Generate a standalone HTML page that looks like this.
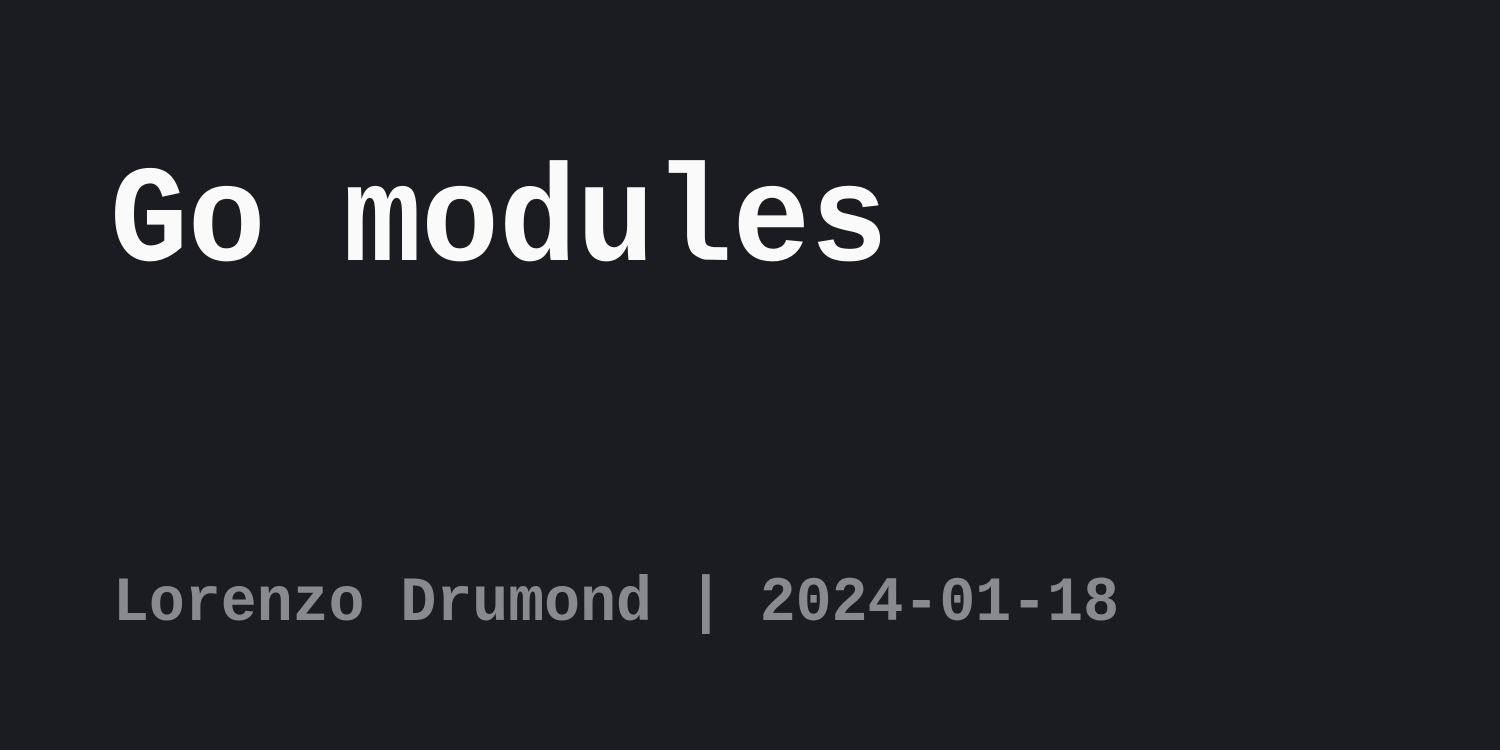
<!DOCTYPE html>
<html><head><meta charset="utf-8"><style>
html,body{margin:0;padding:0;width:1500px;height:750px;background:#1b1c21;overflow:hidden}
svg{display:block}
</style></head><body>
<svg width="1500" height="750" xmlns="http://www.w3.org/2000/svg">
<rect width="1500" height="750" fill="#1b1c21"/>
<g transform="translate(110,260) scale(1,1.06)">
<text x="0" y="0" font-family="Liberation Mono, monospace" font-weight="bold" font-size="130" fill="#fafafa" textLength="778" lengthAdjust="spacingAndGlyphs">Go modules</text>
</g>
<g transform="translate(113,620) scale(1,1.05)">
<text x="0" y="0" font-family="Liberation Mono, monospace" font-weight="bold" font-size="60" fill="#898a8f" textLength="1006" lengthAdjust="spacingAndGlyphs">Lorenzo Drumond | 2024-01-18</text>
</g>
</svg>
</body></html>
